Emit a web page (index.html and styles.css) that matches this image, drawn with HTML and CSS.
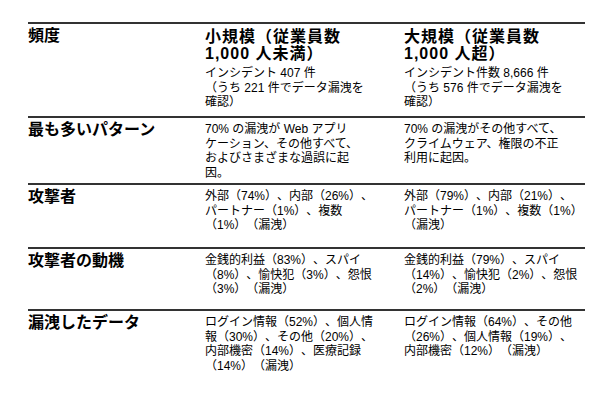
FILE: index.html
```html
<!DOCTYPE html>
<html lang="ja">
<head>
<meta charset="utf-8">
<link rel="stylesheet" href="styles.css">
</head>
<body>
<div class="table">
  <div class="row r-head">
    <div class="label">頻度</div>
    <div class="cell">
      <div class="colhead">小規模（従業員数<br>1,000 人未満）</div>
      <div class="txt">インシデント 407 件<br>（うち 221 件でデータ漏洩を<br>確認）</div>
    </div>
    <div class="cell">
      <div class="colhead">大規模（従業員数<br>1,000 人超）</div>
      <div class="txt">インシデント件数 8,666 件<br>（うち 576 件でデータ漏洩を<br>確認）</div>
    </div>
  </div>
  <div class="row r-pattern">
    <div class="label">最も多いパターン</div>
    <div class="cell txt">70% の漏洩が Web アプリ<br>ケーション、その他すべて、<br>およびさまざまな過誤に起<br>因。</div>
    <div class="cell txt">70% の漏洩がその他すべて、<br>クライムウェア、権限の不正<br>利用に起因。</div>
  </div>
  <div class="row r-actor">
    <div class="label">攻撃者</div>
    <div class="cell txt">外部（74%）、内部（26%）、<br>パートナー（1%）、複数<br>（1%）（漏洩）</div>
    <div class="cell txt">外部（79%）、内部（21%）、<br>パートナー（1%）、複数（1%）<br>（漏洩）</div>
  </div>
  <div class="row r-motive">
    <div class="label">攻撃者の動機</div>
    <div class="cell txt">金銭的利益（83%）、スパイ<br>（8%）、愉快犯（3%）、怨恨<br>（3%）（漏洩）</div>
    <div class="cell txt">金銭的利益（79%）、スパイ<br>（14%）、愉快犯（2%）、怨恨<br>（2%）（漏洩）</div>
  </div>
  <div class="row r-data">
    <div class="label">漏洩したデータ</div>
    <div class="cell txt">ログイン情報（52%）、個人情<br>報（30%）、その他（20%）、<br>内部機密（14%）、医療記録<br>（14%）（漏洩）</div>
    <div class="cell txt">ログイン情報（64%）、その他<br>（26%）、個人情報（19%）、<br>内部機密（12%）（漏洩）</div>
  </div>
</div>
</body>
</html>
```

FILE: styles.css
```css
html, body {
  margin: 0;
  padding: 0;
  background: #fff;
}
body {
  font-family: "Liberation Sans", "Noto Sans CJK JP", sans-serif;
  color: #000;
  text-spacing-trim: space-all;
}
.table {
  width: 557px;
  margin: 22px 0 0 28px;
}
.row {
  display: grid;
  grid-template-columns: 177px 199px 181px;
  border-top: 2px solid #333;
  padding-top: 4px;
  box-sizing: border-box;
}
.r-head { min-height: 94px; }
.r-pattern { min-height: 67px; }
.r-actor { min-height: 64px; }
.r-motive { min-height: 62px; }
.label {
  font-size: 16px;
  font-weight: bold;
  line-height: 16px;
  white-space: nowrap;
}
.colhead {
  font-size: 16px;
  font-weight: bold;
  line-height: 17px;
  letter-spacing: 1px;
  white-space: nowrap;
  margin-bottom: 4px;
}
.txt {
  font-size: 12px;
  line-height: 14.7px;
  white-space: nowrap;
}
```
